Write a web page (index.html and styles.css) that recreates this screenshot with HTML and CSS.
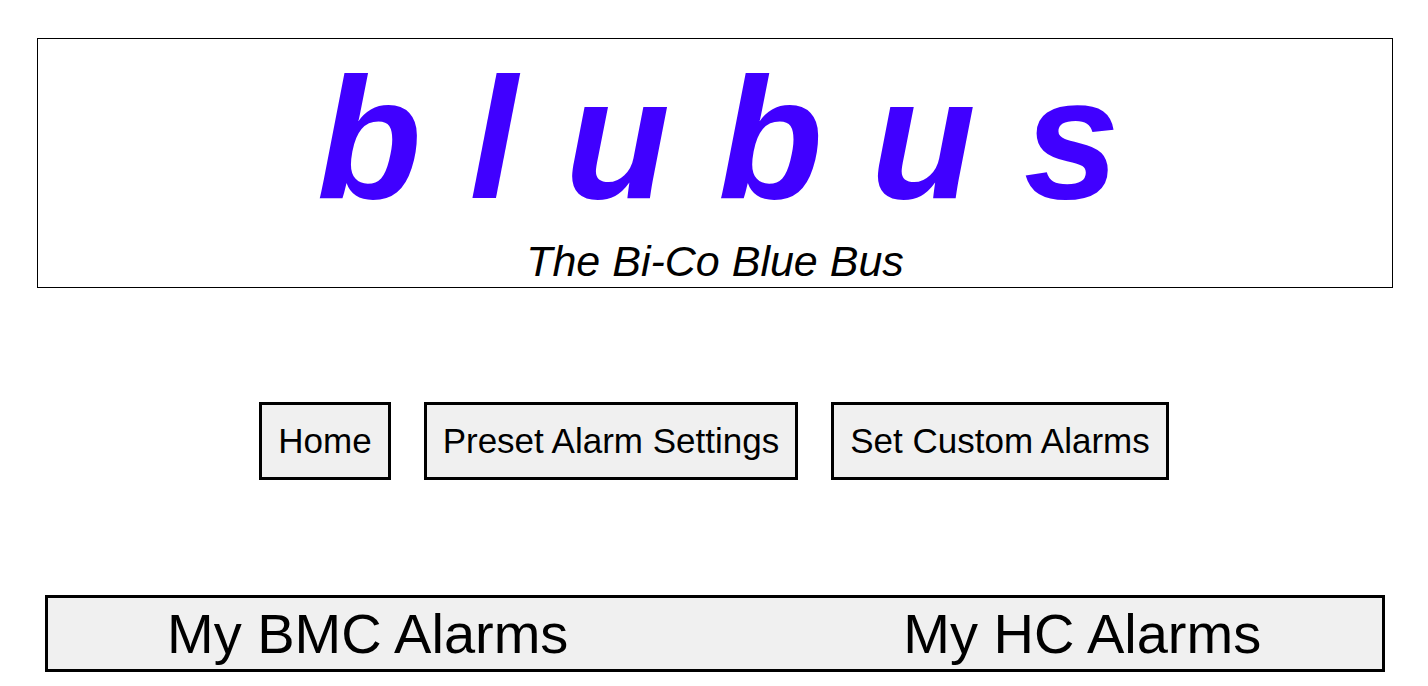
FILE: index.html
```html
<!DOCTYPE html>
<html lang="en">
<head>
<meta charset="utf-8">
<title>blubus</title>
<link rel="stylesheet" href="styles.css">
</head>
<body>
<header class="masthead">
  <h1 class="logo">b l u b u s</h1>
  <p class="tagline">The Bi-Co Blue Bus</p>
</header>
<nav class="nav">
  <button class="nav-btn">Home</button>
  <button class="nav-btn">Preset Alarm Settings</button>
  <button class="nav-btn">Set Custom Alarms</button>
</nav>
<div class="alarm-bar">
  <span class="alarm-tab">My BMC Alarms</span>
  <span class="alarm-tab">My HC Alarms</span>
</div>
</body>
</html>
```

FILE: styles.css
```css
html, body {
  margin: 0;
  padding: 0;
  background: #ffffff;
}
body {
  font-family: "Liberation Sans", Arial, sans-serif;
  color: #000;
  overflow: hidden;
}
.masthead {
  margin: 38px 35px 0 37px;
  border: 1px solid #000;
  text-align: center;
  padding-bottom: 2px;
}
.logo {
  margin: 0;
  font-size: 172px;
  font-weight: bold;
  font-style: italic;
  line-height: normal;
  text-indent: 6px;
  color: #4000ff;
}
.tagline {
  margin: 0;
  font-size: 43px;
  font-style: italic;
  line-height: 48px;
}
.nav {
  display: flex;
  justify-content: center;
  gap: 33px;
  margin-top: 114px;
}
.nav-btn {
  font-family: "Liberation Sans", Arial, sans-serif;
  font-size: 35px;
  line-height: 40px;
  padding: 16px 16px;
  border: 3px solid #000;
  background: #f0f0f0;
  color: #000;
  margin: 0;
}
.alarm-bar {
  display: flex;
  margin: 115px 43px 0 45px;
  border: 3px solid #000;
  background: #f0f0f0;
  padding: 4px 0 3px 119px;
  gap: 335px;
}
.alarm-tab {
  font-size: 56px;
  line-height: 64px;
}
```
